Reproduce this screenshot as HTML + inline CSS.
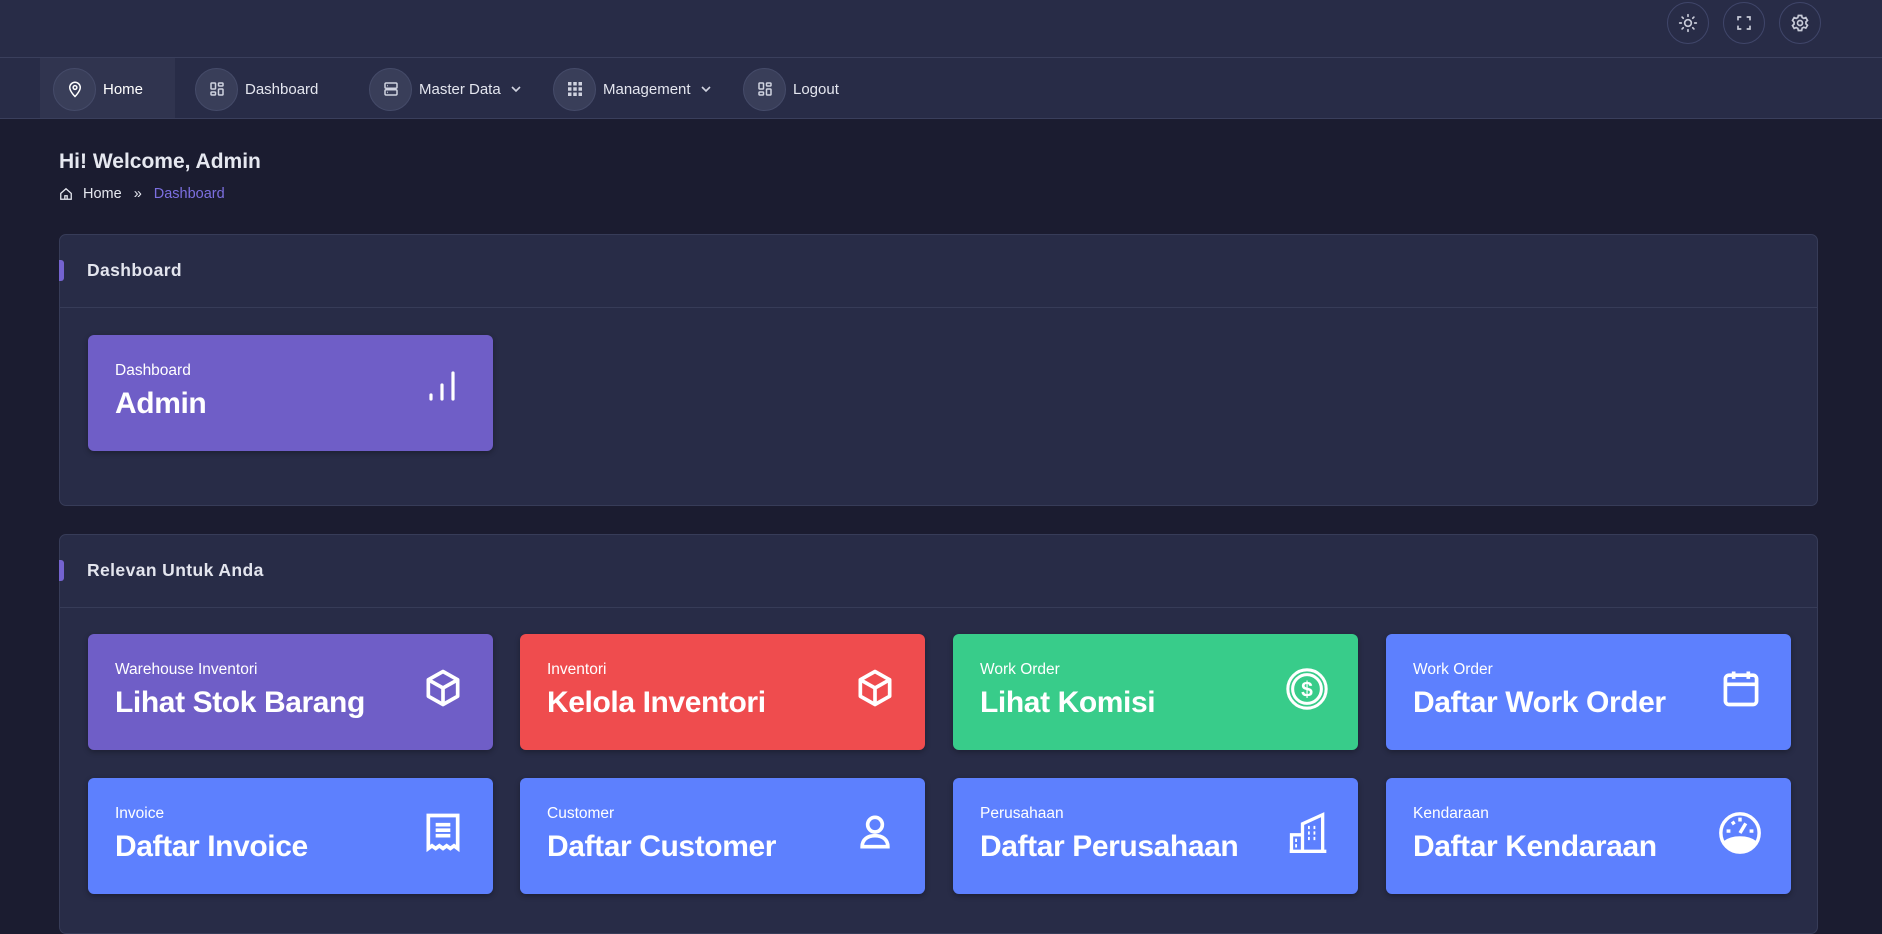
<!DOCTYPE html>
<html><head><meta charset="utf-8"><style>
*{box-sizing:border-box;margin:0;padding:0}
body{width:1882px;height:870px;overflow:hidden;background:#1b1c30;font-family:"Liberation Sans",sans-serif;color:#e6e8f0;position:relative}
.top{position:absolute;left:0;top:0;width:1882px;height:58px;background:#282c47;border-bottom:1px solid #3a3f5c}
.tb{position:absolute;top:2px;width:42px;height:42px;border:1px solid #40466a;border-radius:50%;display:flex;align-items:center;justify-content:center}
.nav{position:absolute;left:0;top:58px;width:1882px;height:61px;background:#282c47;border-bottom:1px solid #3a3f5c}
.hometab{position:absolute;left:40px;top:0;width:135px;height:60px;background:#30344f}
.ni{position:absolute;top:9px;height:44px;display:flex;align-items:center;font-size:15px;color:#e4e6ef}
.ci{width:43px;height:43px;border-radius:50%;background:#393e59;border:1px solid #454b69;display:flex;align-items:center;justify-content:center;margin-right:7px}
.chev{margin-left:10px}
.card{position:absolute;left:59px;width:1759px;background:#282c47;border:1px solid #373c58;border-radius:7px}
.ch{height:73px;border-bottom:1px solid #373c58;position:relative}
.ch span{position:absolute;left:27px;top:25px;font-size:17.5px;font-weight:bold;letter-spacing:.4px;color:#e3e5ee}
.ch i{position:absolute;left:-1px;top:25px;width:5px;height:21px;background:#7463d0;border-radius:0 3px 3px 0}
.tile{position:absolute;width:405px;height:116px;border-radius:6px;box-shadow:0 2px 6px rgba(0,0,0,.3);color:#fff}
.tile .l{position:absolute;left:27px;top:27px;font-size:15.5px}
.tile .t{position:absolute;left:27px;top:52px;font-size:30px;font-weight:bold;letter-spacing:-.4px}
.tile svg{position:absolute;right:28px;top:32px}
.pu{background:#6f5ec7}.re{background:#ef4c4e}.gr{background:#38cc8a}.bl{background:#5d80fe}
</style></head><body>
<div class="top">
<div class="tb" style="left:1667px"><svg width="20" height="20" viewBox="0 0 24 24" fill="none" stroke="#c8cbd8" stroke-width="2" stroke-linecap="round"><circle cx="12" cy="12" r="4"/><path d="M12 2v2M12 20v2M2 12h2M20 12h2M4.9 4.9l1.4 1.4M17.7 17.7l1.4 1.4M4.9 19.1l1.4-1.4M17.7 6.3l1.4-1.4"/></svg></div>
<div class="tb" style="left:1723px"><svg width="16" height="16" viewBox="0 0 24 24" fill="none" stroke="#c8cbd8" stroke-width="2.5"><path d="M3 8V3h5M16 3h5v5M21 16v5h-5M8 21H3v-5"/></svg></div>
<div class="tb" style="left:1779px"><svg width="20" height="20" viewBox="0 0 24 24" fill="none" stroke="#c8cbd8" stroke-width="2"><circle cx="12" cy="12" r="3"/><path d="M10 3h4l.6 2.5 2 1 2.4-1 2 3.4-1.9 1.7v2.4l1.9 1.7-2 3.4-2.4-1-2 1L14 21h-4l-.6-2.5-2-1-2.4 1-2-3.4 1.9-1.7v-2.4L3 8.9l2-3.4 2.4 1 2-1z"/></svg></div>
</div>
<div class="nav">
<div class="hometab"></div>
<div class="ni" style="left:53px"><div class="ci"><svg width="18" height="18" viewBox="0 0 24 24" fill="none" stroke="#fff" stroke-width="2"><path d="M12 22s7-7 7-12a7 7 0 0 0-14 0c0 5 7 12 7 12z"/><circle cx="12" cy="10" r="2.5"/></svg></div><b style="font-weight:500;color:#fff">Home</b></div>
<div class="ni" style="left:195px"><div class="ci"><svg width="18" height="18" viewBox="0 0 24 24" fill="none" stroke="#d0d3e0" stroke-width="2"><rect x="4" y="4" width="6" height="8" rx="1"/><rect x="14" y="4" width="6" height="4" rx="1"/><rect x="4" y="16" width="6" height="4" rx="1"/><rect x="14" y="12" width="6" height="8" rx="1"/></svg></div>Dashboard</div>
<div class="ni" style="left:369px"><div class="ci"><svg width="18" height="18" viewBox="0 0 24 24" fill="none" stroke="#d0d3e0" stroke-width="2"><rect x="4" y="4" width="16" height="7" rx="1.5"/><rect x="4" y="13" width="16" height="7" rx="1.5"/><path d="M7 7.5h1M7 16.5h1"/></svg></div>Master Data<svg class="chev" width="10" height="10" viewBox="0 0 10 10" fill="none" stroke="#d0d3e0" stroke-width="1.6"><path d="M1 3l4 4 4-4"/></svg></div>
<div class="ni" style="left:553px"><div class="ci"><svg width="16" height="16" viewBox="0 0 16 16" fill="#d0d3e0"><rect x="1" y="1" width="3.5" height="3.5"/><rect x="6.25" y="1" width="3.5" height="3.5"/><rect x="11.5" y="1" width="3.5" height="3.5"/><rect x="1" y="6.25" width="3.5" height="3.5"/><rect x="6.25" y="6.25" width="3.5" height="3.5"/><rect x="11.5" y="6.25" width="3.5" height="3.5"/><rect x="1" y="11.5" width="3.5" height="3.5"/><rect x="6.25" y="11.5" width="3.5" height="3.5"/><rect x="11.5" y="11.5" width="3.5" height="3.5"/></svg></div>Management<svg class="chev" width="10" height="10" viewBox="0 0 10 10" fill="none" stroke="#d0d3e0" stroke-width="1.6"><path d="M1 3l4 4 4-4"/></svg></div>
<div class="ni" style="left:743px"><div class="ci"><svg width="18" height="18" viewBox="0 0 24 24" fill="none" stroke="#d0d3e0" stroke-width="2"><rect x="4" y="4" width="6" height="8" rx="1"/><rect x="14" y="4" width="6" height="4" rx="1"/><rect x="4" y="16" width="6" height="4" rx="1"/><rect x="14" y="12" width="6" height="8" rx="1"/></svg></div>Logout</div>
</div>
<div style="position:absolute;left:59px;top:150px;font-size:21px;font-weight:bold;color:#e6e8f0">Hi! Welcome, Admin</div>
<div style="position:absolute;left:59px;top:186px;font-size:14.5px;display:flex;align-items:center;color:#e6e8f0">
<svg width="14" height="14" viewBox="0 0 24 24" fill="none" stroke="#e6e8f0" stroke-width="2.2"><path d="M3 11l9-8 9 8v10H3z"/><path d="M10 21v-6h4v6"/></svg>
<span style="margin-left:10px">Home</span><span style="margin-left:12px;margin-right:12px">»</span><span style="color:#7c6fe0">Dashboard</span></div>

<div class="card" style="top:234px;height:272px">
<div class="ch"><i></i><span>Dashboard</span></div>
<div class="tile pu" style="left:28px;top:100px;"><div class="l">Dashboard</div><div class="t">Admin</div>
<svg width="30" height="40" viewBox="0 0 30 40" fill="none" stroke="#fff" stroke-width="3.2" stroke-linecap="round" style="right:36px;top:34px"><path d="M4 30v-4M15 30V16M26 30V4"/></svg></div>
</div>

<div class="card" style="top:534px;height:400px">
<div class="ch"><i></i><span>Relevan Untuk Anda</span></div>
</div>
<div class="tile pu" style="left:88px;top:634px"><div class="l">Warehouse Inventori</div><div class="t">Lihat Stok Barang</div>
<svg width="44" height="44" viewBox="0 0 24 24" fill="none" stroke="#fff" stroke-width="2" stroke-linejoin="round"><path d="M12 3l8 4.5v9L12 21l-8-4.5v-9z"/><path d="M4 7.5l8 4.5 8-4.5M12 12v9"/></svg></div>
<div class="tile re" style="left:520px;top:634px"><div class="l">Inventori</div><div class="t">Kelola Inventori</div>
<svg width="44" height="44" viewBox="0 0 24 24" fill="none" stroke="#fff" stroke-width="2" stroke-linejoin="round"><path d="M12 3l8 4.5v9L12 21l-8-4.5v-9z"/><path d="M4 7.5l8 4.5 8-4.5M12 12v9"/></svg></div>
<div class="tile gr" style="left:953px;top:634px"><div class="l">Work Order</div><div class="t">Lihat Komisi</div>
<svg width="46" height="46" viewBox="0 0 24 24" fill="none" stroke="#fff" stroke-width="1.6"><circle cx="12" cy="12" r="10"/><circle cx="12" cy="12" r="7.5"/><text x="12" y="16" font-size="11" text-anchor="middle" fill="#fff" stroke="none" font-family="Liberation Sans" font-weight="bold">$</text></svg></div>
<div class="tile bl" style="left:1386px;top:634px"><div class="l">Work Order</div><div class="t">Daftar Work Order</div>
<svg width="44" height="44" viewBox="0 0 24 24" fill="none" stroke="#fff" stroke-width="2"><rect x="3.5" y="5" width="17" height="16" rx="2"/><path d="M3.5 10h17M8 3v4M16 3v4"/></svg></div>

<div class="tile bl" style="left:88px;top:778px"><div class="l">Invoice</div><div class="t">Daftar Invoice</div>
<svg width="44" height="44" viewBox="0 0 24 24" fill="none" stroke="#fff" stroke-width="2"><path d="M4 3h16v18l-2-1.5-2 1.5-2-1.5-2 1.5-2-1.5-2 1.5-2-1.5L4 21z"/><path d="M8 8h8M8 11h8M8 14h8"/></svg></div>
<div class="tile bl" style="left:520px;top:778px"><div class="l">Customer</div><div class="t">Daftar Customer</div>
<svg width="44" height="44" viewBox="0 0 24 24" fill="none" stroke="#fff" stroke-width="2"><circle cx="12" cy="8" r="4"/><path d="M5 20c0-4 3-6 7-6s7 2 7 6z"/></svg></div>
<div class="tile bl" style="left:953px;top:778px"><div class="l">Perusahaan</div><div class="t">Daftar Perusahaan</div>
<svg width="44" height="46" viewBox="0 0 24 24" fill="none" stroke="#fff" stroke-width="1.8"><path d="M3 22V13h6v9M9 22V7l11-5v20zM2 22h20M12 9h1M15 9h1M12 12h1M15 12h1M12 15h1M15 15h1M5 16h1M5 19h1"/></svg></div>
<div class="tile bl" style="left:1386px;top:778px"><div class="l">Kendaraan</div><div class="t">Daftar Kendaraan</div>
<svg width="46" height="46" viewBox="0 0 24 24" fill="none" stroke="#fff" stroke-width="1.8"><circle cx="12" cy="12" r="10"/><path d="M4 17a10 6 0 0 1 16 0 10 10 0 0 1-16 0z" fill="#fff"/><path d="M12 12l3-5M5 11h2M17 11h2M8 6l1 1.5M12 4v2"/></svg></div>
</body></html>
